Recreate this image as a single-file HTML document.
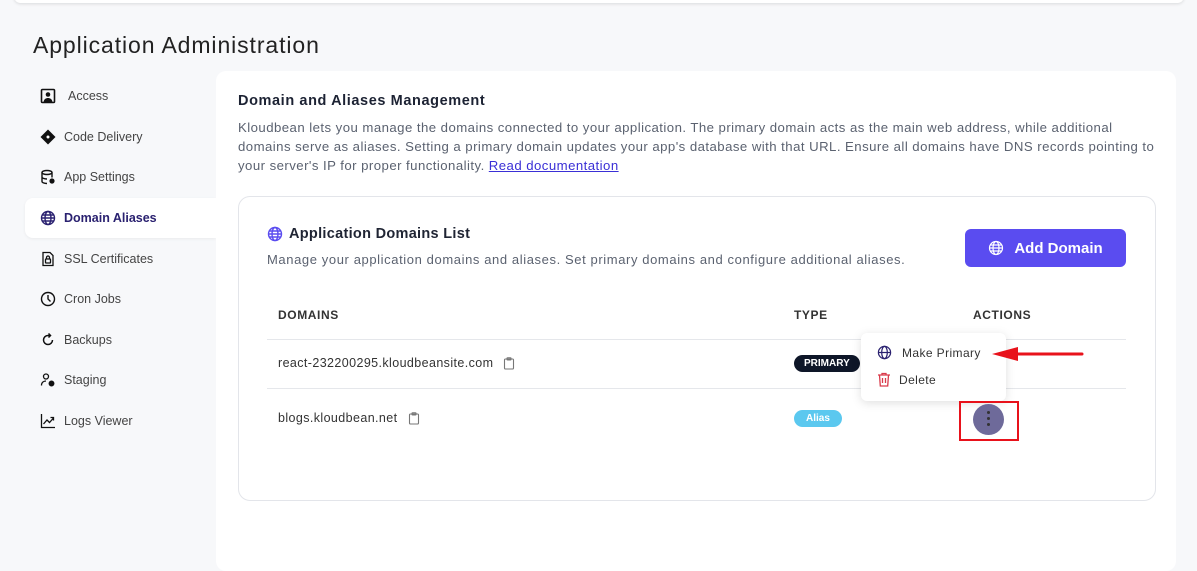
<!DOCTYPE html>
<html><head><style>
*{box-sizing:border-box;margin:0;padding:0}
body{width:1197px;height:545px;overflow:hidden;background:#f7f8fa;font-family:"Liberation Sans",sans-serif;color:#1f2433;position:relative}
.top{position:absolute;left:14px;top:-10px;width:1170px;height:13px;background:#fff;border-radius:8px;box-shadow:0 1px 3px rgba(0,0,0,.12)}
h1{position:absolute;left:33px;top:32px;font-size:23px;font-weight:400;color:#222;letter-spacing:.9px}
.nav{position:absolute;left:25px;top:76px;width:191px}
.item{height:40.6px;display:flex;align-items:center;padding-left:15px;font-size:12.5px;color:#444}
.item svg{width:16px;height:16px;margin-right:8px;flex:none}
.item.act{background:#fff;border-radius:8px 0 0 8px;color:#2a2170;font-weight:bold;box-shadow:0 1px 3px rgba(0,0,0,.06)}
.main{position:absolute;left:216px;top:71px;width:960px;height:500px;background:#fff;border-radius:10px}
.t1{position:absolute;left:238px;top:93px;font-size:14.5px;font-weight:bold;color:#1c2233;letter-spacing:.6px}
.desc{position:absolute;left:238px;top:118px;white-space:nowrap;font-size:13.2px;line-height:19px;color:#5b6270;letter-spacing:.45px}
.desc a{color:#3a2fd6;text-decoration:underline}
.card{position:absolute;left:238px;top:196px;width:918px;height:305px;border:1px solid #e3e5ea;border-radius:12px;background:#fff}
.ct{position:absolute;left:267px;top:226px;font-size:14.5px;font-weight:bold;display:flex;align-items:center;letter-spacing:.3px}
.cs{position:absolute;left:267px;top:252px;font-size:13px;color:#5b6270;letter-spacing:.6px;white-space:nowrap}
.btn{position:absolute;left:965px;top:229px;width:161px;height:38px;background:#5a4cf0;border-radius:6px;color:#fff;font-weight:bold;font-size:15px;display:flex;align-items:center;justify-content:center}
.th{position:absolute;top:308px;font-size:12px;font-weight:bold;letter-spacing:.6px;color:#333}
.line{position:absolute;left:267px;width:859px;height:1px;background:#e5e7eb}
.dom{position:absolute;left:278px;font-size:12.5px;color:#333;display:flex;align-items:center;letter-spacing:.4px}
.badge{position:absolute;font-size:10px;font-weight:bold;border-radius:9px;padding:3px 10px}
.menu{position:absolute;left:861px;top:333px;width:145px;height:68px;background:#fff;border-radius:6px;box-shadow:0 2px 10px rgba(0,0,0,.13)}
.mi{position:absolute;font-size:12px;color:#333;display:flex;align-items:center;letter-spacing:.4px}
</style></head><body>
<div class="top"></div>
<h1>Application Administration</h1>
<div class="nav">
<div class="item"><svg viewBox="0 0 16 16"><rect x="1.5" y="1.5" width="13" height="13" rx="1" fill="none" stroke="#111" stroke-width="1.6"/><circle cx="8" cy="6.5" r="2.3" fill="#111"/><path d="M3.5 14c.5-3 2.5-4 4.5-4s4 1 4.5 4z" fill="#111"/></svg><span style="margin-left:4px">Access</span></div>
<div class="item"><svg viewBox="0 0 16 16"><path d="M8 0.5L15.5 8 8 15.5 0.5 8z" fill="#111"/><circle cx="8" cy="8" r="1.5" fill="#fff"/></svg>Code Delivery</div>
<div class="item"><svg viewBox="0 0 16 16"><ellipse cx="7" cy="3.5" rx="5" ry="2" fill="none" stroke="#111" stroke-width="1.4"/><path d="M2 3.5v9c0 1.1 2.2 2 5 2M12 3.5v5M2 8c0 1.1 2.2 2 5 2" fill="none" stroke="#111" stroke-width="1.4"/><circle cx="12" cy="12" r="2.6" fill="#111"/></svg>App Settings</div>
<div class="item act"><svg viewBox="0 0 16 16" fill="none" stroke="#2a2170" stroke-width="1.4"><circle cx="8" cy="8" r="6.5"/><ellipse cx="8" cy="8" rx="3" ry="6.5"/><path d="M1.5 8h13M2.5 5h11M2.5 11h11"/></svg>Domain Aliases</div>
<div class="item"><svg viewBox="0 0 16 16" fill="none" stroke="#111" stroke-width="1.3"><path d="M3 1.5h7l3 3v10H3z"/><rect x="5.5" y="8" width="5" height="4" rx=".5"/><path d="M6.5 8V6.5a1.5 1.5 0 0 1 3 0V8"/></svg>SSL Certificates</div>
<div class="item"><svg viewBox="0 0 16 16" fill="none" stroke="#111" stroke-width="1.4"><circle cx="8" cy="8" r="6.5"/><path d="M8 4v4l2.5 2.5"/></svg>Cron Jobs</div>
<div class="item"><svg viewBox="0 0 16 16" fill="none" stroke="#111" stroke-width="1.5"><path d="M12.5 8A4.5 4.5 0 1 1 8 3.5h2"/><path d="M8.5 1.5l2 2-2 2"/></svg>Backups</div>
<div class="item"><svg viewBox="0 0 16 16" fill="none" stroke="#111" stroke-width="1.3"><circle cx="6" cy="4.5" r="2.5"/><path d="M1.5 13.5c0-3 2-4.5 4.5-4.5"/><circle cx="11.5" cy="11.5" r="2.3" fill="#111"/></svg>Staging</div>
<div class="item"><svg viewBox="0 0 16 16" fill="none" stroke="#111" stroke-width="1.3"><path d="M1.5 1v13.5H15"/><path d="M3.5 11l3.5-4 2.5 2.5 4-4.5M10.5 4.5h3v3"/></svg>Logs Viewer</div>
</div>
<div class="main"></div>
<div class="t1">Domain and Aliases Management</div>
<div class="desc">Kloudbean lets you manage the domains connected to your application. The primary domain acts as the main web address, while additional<br>domains serve as aliases. Setting a primary domain updates your app's database with that URL. Ensure all domains have DNS records pointing to<br>your server's IP for proper functionality. <a>Read documentation</a></div>
<div class="card"></div>
<div class="ct"><svg width="16" height="16" viewBox="0 0 16 16" fill="none" stroke="#5a4cf0" stroke-width="1.4" style="margin-right:6px"><circle cx="8" cy="8" r="6.5"/><ellipse cx="8" cy="8" rx="3" ry="6.5"/><path d="M1.5 8h13M2.5 5h11M2.5 11h11"/></svg>Application Domains List</div>
<div class="cs">Manage your application domains and aliases. Set primary domains and configure additional aliases.</div>
<div class="btn"><svg width="16" height="16" viewBox="0 0 16 16" fill="none" stroke="#fff" stroke-width="1.2" style="margin-right:10px"><circle cx="8" cy="8" r="6.5"/><ellipse cx="8" cy="8" rx="3" ry="6.5"/><path d="M1.5 8h13M2.5 5h11M2.5 11h11"/></svg>Add Domain</div>
<div class="th" style="left:278px">DOMAINS</div>
<div class="th" style="left:794px">TYPE</div>
<div class="th" style="left:973px">ACTIONS</div>
<div class="line" style="top:339px"></div>
<div class="line" style="top:388px"></div>
<div class="dom" style="top:356px">react-232200295.kloudbeansite.com<svg width="12" height="13" viewBox="0 0 12 13" fill="none" stroke="#777" stroke-width="1.1" style="margin-left:10px"><rect x="1.5" y="2" width="9" height="10" rx="1"/><rect x="4" y=".8" width="4" height="2.2" rx=".5"/></svg></div>
<div class="dom" style="top:411px">blogs.kloudbean.net<svg width="12" height="13" viewBox="0 0 12 13" fill="none" stroke="#777" stroke-width="1.1" style="margin-left:10px"><rect x="1.5" y="2" width="9" height="10" rx="1"/><rect x="4" y=".8" width="4" height="2.2" rx=".5"/></svg></div>
<div class="badge" style="left:794px;top:355px;background:#0e1628;color:#fff">PRIMARY</div>
<div class="badge" style="left:794px;top:410px;background:#5bc8ef;color:#fff;padding:3px 12px">Alias</div>
<div class="menu"></div>
<div class="mi" style="left:877px;top:345px"><svg width="15" height="15" viewBox="0 0 16 16" fill="none" stroke="#2a2170" stroke-width="1.3" style="margin-right:10px"><circle cx="8" cy="8" r="6.5"/><ellipse cx="8" cy="8" rx="3" ry="6.5"/><path d="M1.5 8h13"/></svg>Make Primary</div>
<div class="mi" style="left:877px;top:372px"><svg width="14" height="15" viewBox="0 0 14 15" fill="none" stroke="#d93a4a" stroke-width="1.3" style="margin-right:8px"><path d="M1 3h12M5 3V1.5h4V3M2.5 3l.8 11h7.4l.8-11M5.5 6v5M8.5 6v5"/></svg>Delete</div>
<svg style="position:absolute;left:990px;top:347px" width="95" height="14"><path d="M20 7H92" stroke="#e8121b" stroke-width="3" stroke-linecap="round"/><path d="M2 7L28 0V14Z" fill="#e8121b"/></svg>
<div style="position:absolute;left:959px;top:401px;width:60px;height:40px;border:2px solid #e8121b"></div>
<div style="position:absolute;left:973px;top:404px;width:31px;height:31px;border-radius:50%;background:#6e6a9a"></div>
<div style="position:absolute;left:987px;top:411px;width:3px;height:3px;border-radius:50%;background:#333;box-shadow:0 6px #333,0 12px #333"></div>
</body></html>
